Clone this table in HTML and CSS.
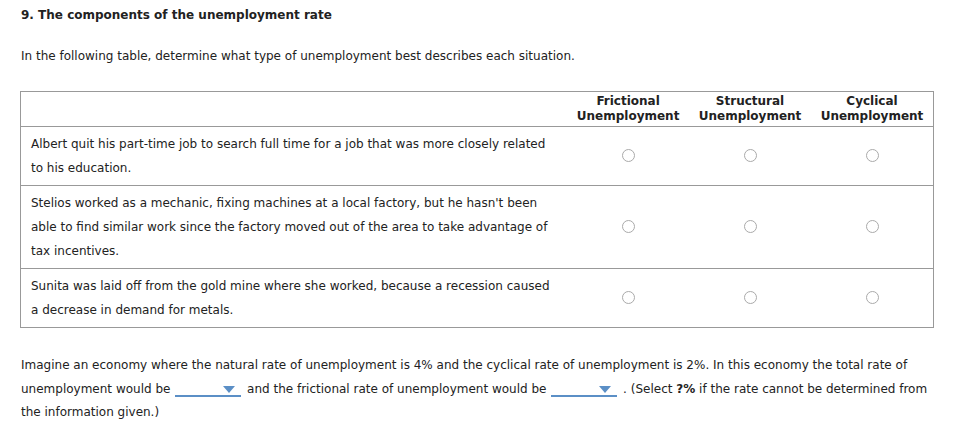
FILE: index.html
```html
<!DOCTYPE html>
<html>
<head>
<meta charset="utf-8">
<link rel="stylesheet" href="styles.css">
</head>
<body>
<div class="page">
  <h1 class="title">9. The components of the unemployment rate</h1>
  <p class="intro">In the following table, determine what type of unemployment best describes each situation.</p>
  <table class="grid">
    <thead>
      <tr>
        <th class="scenario-head"></th>
        <th class="opt-head">Frictional<br>Unemployment</th>
        <th class="opt-head">Structural<br>Unemployment</th>
        <th class="opt-head">Cyclical<br>Unemployment</th>
      </tr>
    </thead>
    <tbody>
      <tr>
        <td class="scenario">Albert quit his part-time job to search full time for a job that was more closely related to his education.</td>
        <td class="opt"><span class="radio"></span></td>
        <td class="opt"><span class="radio"></span></td>
        <td class="opt"><span class="radio"></span></td>
      </tr>
      <tr>
        <td class="scenario">Stelios worked as a mechanic, fixing machines at a local factory, but he hasn't been able to find similar work since the factory moved out of the area to take advantage of tax incentives.</td>
        <td class="opt"><span class="radio"></span></td>
        <td class="opt"><span class="radio"></span></td>
        <td class="opt"><span class="radio"></span></td>
      </tr>
      <tr>
        <td class="scenario">Sunita was laid off from the gold mine where she worked, because a recession caused a decrease in demand for metals.</td>
        <td class="opt"><span class="radio"></span></td>
        <td class="opt"><span class="radio"></span></td>
        <td class="opt"><span class="radio"></span></td>
      </tr>
    </tbody>
  </table>
  <p class="question">Imagine an economy where the natural rate of unemployment is 4% and the cyclical rate of unemployment is 2%. In this economy the total rate of unemployment would be <span class="dropdown"><span class="caret"></span></span> and the frictional rate of unemployment would be <span class="dropdown"><span class="caret"></span></span> . (Select <b>?%</b> if the rate cannot be determined from the information given.)</p>
</div>
</body>
</html>
```

FILE: styles.css
```css
html, body {
  margin: 0;
  padding: 0;
  background: #fff;
}
body {
  font-family: "DejaVu Sans", Verdana, sans-serif;
  font-size: 12px;
  color: #222;
}
.page {
  padding: 7px 19px 0 21px;
}
.title {
  font-size: 12px;
  font-weight: bold;
  margin: 0;
  line-height: 16px;
  color: #222;
}
.intro {
  margin: 25px 0 0 0;
  line-height: 16px;
}
.grid {
  margin-top: 27px;
  margin-left: -1px;
  border-collapse: collapse;
  width: 914px;
  border: 1px solid #999;
}
.grid th, .grid td {
  border-top: 1px solid #999;
  border-bottom: 1px solid #999;
  padding: 0;
}
.scenario-head {
  width: 547px;
}
.opt-head {
  width: 122px;
  font-weight: bold;
  text-align: center;
  line-height: 15px;
  padding: 2px 0 2px 0 !important;
  vertical-align: middle;
  color: #222;
}
.scenario {
  padding: 5px 10px 5px 10px !important;
  line-height: 24px;
  vertical-align: middle;
}
.opt {
  text-align: center;
  vertical-align: middle;
}
.radio {
  display: inline-block;
  width: 11px;
  height: 11px;
  border: 1px solid #aaa;
  border-radius: 50%;
  vertical-align: middle;
  margin-top: -2px;
}
.question {
  margin: 26px 0 0 0;
  line-height: 23.5px;
}
.dropdown {
  display: inline-block;
  position: relative;
  width: 66px;
  height: 14px;
  border-bottom: 2px solid #5b8fc6;
  vertical-align: -4px;
  margin: 0 2px 0 1px;
}
.caret {
  position: absolute;
  right: 6px;
  top: 5px;
  width: 0;
  height: 0;
  border-left: 6px solid transparent;
  border-right: 6px solid transparent;
  border-top: 7px solid #5b8fc6;
}
```
